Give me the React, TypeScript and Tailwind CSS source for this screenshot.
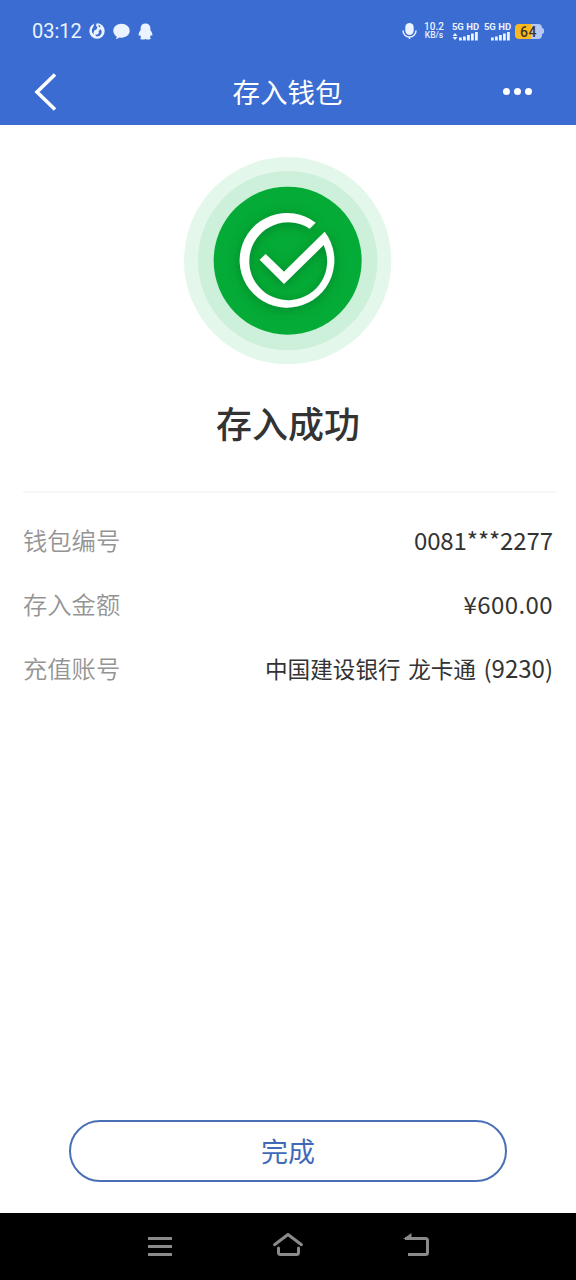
const rows = [
  { label: "钱包编号", value: <span className="tracking-[-0.1px]">0081***2277</span> },
  { label: "存入金额", value: <span className="tracking-[0.4px]">¥600.00</span> },
  {
    label: "充值账号",
    value: (
      <>
        <span className="text-[22.6px] [word-spacing:2.5px]">中国建设银行 龙卡通 </span>
        (9230)
      </>
    ),
  },
];

function Signal({ roaming }: { roaming?: boolean }) {
  return (
    <div className="flex w-[27px] flex-col items-center">
      <span className="whitespace-nowrap text-[9.5px] font-bold leading-[10px]">5G HD</span>
      <svg className="h-[9px] w-[27px]" viewBox="0 0 27 9" fill="currentColor">
        {roaming && <path d="M0.5 4L3 1l2.5 3zM0.5 5L3 8l2.5-3z" />}
        <rect x="7" y="5.5" width="2.8" height="3" />
        <rect x="11" y="4.5" width="2.8" height="4" />
        <rect x="15" y="3" width="2.8" height="5.5" />
        <rect x="19" y="1.5" width="2.8" height="7" />
        <rect x="23" y="0" width="2.8" height="8.5" />
      </svg>
    </div>
  );
}

function StatusBar() {
  return (
    <div className="flex h-[62px] items-center justify-between px-8 text-[#eaf3ff]">
      <div className="flex items-center">
        <span className="w-[57px] text-[20px] leading-6">03:12</span>
        <svg className="h-4 w-4" viewBox="0 0 16 16">
          <circle cx="8" cy="8" r="7.7" fill="currentColor" />
          <path
            d="M5.5 0L8 .2 6.8 2.4l1.6 1.8-1 2.4-1.900.6-1 2.200.3 2.200-1.700-2-.3-3L4.200 4zM9.500 1.800l1.800 1-.3 1.700-1.300-.9zM11.400 6l1.300 2.200-.3 2.600-2 2.200-2.800.4-1.600-1.600 2.400-.2 1.500-1.500-.2-1.900z"
            fill="#3b6cd1"
          />
        </svg>
        <svg className="ml-2 h-[17px] w-[17px]" viewBox="0 0 17 17" fill="currentColor">
          <path d="M8.5 .8C4 .8 .3 3.800 .3 7.800c0 2.400 1.300 4.500 3.400 5.700L3 16.200l3.600-1.700c.6 .1 1.200 .2 1.900 .2 4.500 0 8.200-3 8.200-6.900S13 .8 8.500 .8z" />
        </svg>
        <svg className="ml-2 h-[17px] w-[15px]" viewBox="0 0 15 17" fill="currentColor">
          <path d="M7.5 .5C4.500 .5 2.600 2.500 2.600 5.200v2C1.400 8.600 .6 10.300 .6 12c0 1 .5 1 1.500 0 .2 1 .6 1.700 1.200 2.300-.8 .4-1 .8-1 1.200 0 1.400 4.100 1.200 5.200 .5 1.100 .7 5.200 .9 5.200-.5 0-.4-.2-.8-1-1.200 .6-.6 1-1.300 1.200-2.300 1 1 1.500 1 1.500 0 0-1.700-.8-3.400-2-4.800v-2C12.400 2.500 10.500 .5 7.500 .5z" />
        </svg>
      </div>

      <div className="flex items-center">
        <svg className="h-[18px] w-[15px]" viewBox="0 0 15 18">
          <rect x="3.3" y="1" width="8.4" height="12" rx="4.2" fill="currentColor" />
          <path d="M1 8.5c0 4 3 6.500 6.500 6.500S14 12.500 14 8.500M7.500 15v2" fill="none" stroke="currentColor" strokeWidth="1.5" />
        </svg>
        <div className="ml-[7px] flex w-5 flex-col items-center font-medium leading-[9px]">
          <span className="text-[10px]">10.2</span>
          <span className="text-[8.5px]">KB/s</span>
        </div>
        <div className="ml-2 flex gap-[5px]">
          <Signal roaming />
          <Signal />
        </div>
        <div className="ml-1 flex items-center">
          <span className="h-[15px] w-[27px] rounded-[4px] bg-linear-to-r from-[#fbb81f] from-60% to-[#b5c9f4] to-60% text-center text-[14px] font-medium leading-4 tracking-[0.5px] text-[#3d3526]">
            64
          </span>
          <span className="h-[6px] w-[2px] rounded-r-sm bg-[#b5c9f4]" />
        </div>
      </div>
    </div>
  );
}

function SuccessIcon() {
  return (
    <svg className="h-52 w-52" viewBox="42 35 624 624">
      <defs>
        <filter id="shadow" x="-20%" y="-20%" width="140%" height="140%">
          <feDropShadow dx="0" dy="6" stdDeviation="16" floodColor="#005c1c" floodOpacity="0.5" />
        </filter>
      </defs>
      <circle cx="353" cy="346" r="311" fill="#e4f7eb" />
      <circle cx="353" cy="346" r="269" fill="#ccf0d9" />
      <circle cx="353" cy="346" r="222" fill="#04ab36" />
      <path
        d="M437 232A142 142 0 1 0 464 259L342 379L287 326L269 343L342 416L461 299A117 117 0 1 1 419 250Z"
        fill="#fff"
        filter="url(#shadow)"
      />
    </svg>
  );
}

export default function App() {
  return (
    <div className="flex h-[1280px] w-[576px] flex-col bg-white font-[Roboto,'Noto_Sans_CJK_SC',sans-serif]">
      <header className="h-[125px] bg-[#3b6cd1]">
        <StatusBar />
        <div className="flex h-[60px] items-center justify-between pl-[34px] pr-[43px] text-white">
          <svg className="h-[38px] w-[39px]" viewBox="0 0 39 38" fill="none" stroke="currentColor" strokeWidth="3.6">
            <path d="M21 1.5L3 19L21 36.5" />
          </svg>
          <h1 className="pt-[3px] text-[27.5px] font-normal">存入钱包</h1>
          <svg className="h-2 w-[31px]" viewBox="0 0 31 8" fill="currentColor">
            <circle cx="4.5" cy="3.5" r="3.5" />
            <circle cx="15.5" cy="3.5" r="3.5" />
            <circle cx="26.5" cy="3.5" r="3.5" />
          </svg>
        </div>
      </header>

      <main className="flex flex-1 flex-col items-center pt-8">
        <SuccessIcon />
        <h2 className="mt-[34px] text-[36px] font-medium leading-[54px] text-[#333]">存入成功</h2>
        <div className="ml-[2px] mt-[38px] w-[533px] border-t-2 border-[#f7f7f7]" />

        <dl className="mt-[15px] w-full px-[23px] font-['Noto_Sans_CJK_SC',sans-serif]">
          {rows.map((row) => (
            <div key={row.label} className="flex h-16 items-center justify-between">
              <dt className="text-[24.3px] font-[350] text-[#949494]">{row.label}</dt>
              <dd className="whitespace-nowrap text-[24px] text-[#333]">{row.value}</dd>
            </div>
          ))}
        </dl>

        <button className="mb-[31px] mt-auto h-[62px] w-[438px] rounded-full border-2 border-[#4a6fb5] pt-[5px] text-[27px] text-[#4169b8]">
          完成
        </button>
      </main>

      <nav className="flex h-[67px] items-center justify-center gap-24 bg-black pb-px">
        <svg className="h-8 w-8" viewBox="0 0 32 32" fill="none" stroke="#8a8a8a" strokeWidth="3">
          <path d="M4 8.5h24M4 16.5h24M4 24.5h24" />
        </svg>
        <svg className="h-8 w-8" viewBox="0 0 32 32" fill="none" stroke="#8a8a8a" strokeWidth="3" strokeLinecap="round" strokeLinejoin="round">
          <path d="M2.5 14.7L16 4.5l13.5 10.2M6.500 18v4.500q0 2 2 2h16q2 0 2-2v-4.500" />
        </svg>
        <svg className="h-8 w-8" viewBox="0 0 32 32" fill="none" stroke="#8a8a8a" strokeWidth="3">
          <path d="M5 8.5h20.500q2 0 2 2v12q0 2-2 2H8" />
          <path d="M3 9L11.500 3v6z" fill="#8a8a8a" stroke="none" />
        </svg>
      </nav>
    </div>
  );
}
